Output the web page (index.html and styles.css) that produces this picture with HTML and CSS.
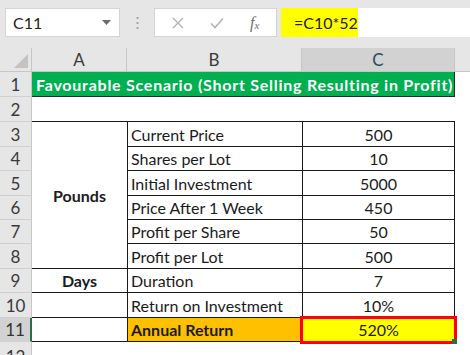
FILE: index.html
```html
<!DOCTYPE html>
<html>
<head>
<meta charset="utf-8">
<link rel="stylesheet" href="styles.css">
</head>
<body>
<div class="app">
  <div class="fbar">
    <div class="namebox">
      <span class="ref">C11</span>
      <svg class="caret" width="9" height="5" viewBox="0 0 9 5"><path d="M0 0H9L4.5 5Z" fill="#6b6b6b"/></svg>
    </div>
    <div class="grip">
      <svg width="3" height="14" viewBox="0 0 3 14"><rect x="0.5" y="1" width="2" height="2" fill="#a6a6a6"/><rect x="0.5" y="6" width="2" height="2" fill="#a6a6a6"/><rect x="0.5" y="11" width="2" height="2" fill="#a6a6a6"/></svg>
    </div>
    <div class="fbtns">
      <svg class="ico" width="12" height="12" viewBox="0 0 12 12"><path d="M1 1L11 11M11 1L1 11" stroke="#b4b4b4" stroke-width="1.4" fill="none"/></svg>
      <svg class="ico" width="14" height="12" viewBox="0 0 14 12"><path d="M1 6.5L5 10.5L13 1.5" stroke="#b4b4b4" stroke-width="1.6" fill="none"/></svg>
      <span class="fx">f<sub>x</sub></span>
    </div>
    <div class="finput"><span class="hl">=C10*52</span></div>
  </div>

  <div class="sheet">
    <div class="corner"><svg width="14" height="14" viewBox="0 0 14 14"><path d="M14 0V14H0Z" fill="#c4c4c4"/></svg></div>
    <div class="colh">A</div>
    <div class="colh">B</div>
    <div class="colh sel">C</div>
    <div class="colh rest"></div>

    <div class="rowh">1</div>
    <div class="title">Favourable Scenario (Short Selling Resulting in Profit)</div>
    <div class="blank"></div>

    <div class="rowh">2</div>
    <div class="gap"></div>
    <div class="blank"></div>

    <div class="rowh">3</div>
    <div class="grp pounds">Pounds</div>
    <div class="lbl">Current Price</div>
    <div class="val">500</div>
    <div class="blank"></div>

    <div class="rowh">4</div>
    <div class="lbl">Shares per Lot</div>
    <div class="val">10</div>
    <div class="blank"></div>

    <div class="rowh">5</div>
    <div class="lbl">Initial Investment</div>
    <div class="val">5000</div>
    <div class="blank"></div>

    <div class="rowh">6</div>
    <div class="lbl">Price After 1 Week</div>
    <div class="val">450</div>
    <div class="blank"></div>

    <div class="rowh">7</div>
    <div class="lbl">Profit per Share</div>
    <div class="val">50</div>
    <div class="blank"></div>

    <div class="rowh">8</div>
    <div class="lbl">Profit per Lot</div>
    <div class="val">500</div>
    <div class="blank"></div>

    <div class="rowh">9</div>
    <div class="grp">Days</div>
    <div class="lbl">Duration</div>
    <div class="val">7</div>
    <div class="blank"></div>

    <div class="rowh">10</div>
    <div class="grp"></div>
    <div class="lbl">Return on Investment</div>
    <div class="val">10%</div>
    <div class="blank"></div>

    <div class="rowh selrow">11</div>
    <div class="grp"></div>
    <div class="lbl annual">Annual Return</div>
    <div class="val result">520%<span class="handle"></span></div>
    <div class="blank"></div>

    <div class="rowh last">12</div>
    <div class="blank"></div>
    <div class="blank"></div>
    <div class="blank"></div>
    <div class="blank"></div>
  </div>
</div>
</body>
</html>
```

FILE: styles.css
```css
* { box-sizing: border-box; }
html, body { margin: 0; padding: 0; }
body {
  width: 470px;
  height: 355px;
  overflow: hidden;
  background: #ffffff;
  font-family: "Lato", "Open Sans", sans-serif;
  color: #1b1b1b;
}
.app { width: 470px; height: 355px; display: flex; flex-direction: column; }

/* formula bar */
.fbar {
  height: 48px;
  background: #e6e6e6;
  display: flex;
  align-items: flex-start;
  padding-top: 8px;
  flex: none;
}
.namebox {
  margin-left: 5px;
  width: 115px;
  height: 29px;
  background: #fff;
  border: 1px solid #d4d4d4;
  display: flex;
  align-items: center;
  justify-content: space-between;
  padding: 0 8px 0 7px;
  font-size: 16px;
  color: #222;
}
.grip { width: 34px; height: 29px; display: flex; align-items: center; justify-content: center; }
.fbtns {
  width: 123px;
  height: 29px;
  background: #fff;
  border: 1px solid #d4d4d4;
  display: flex;
  align-items: center;
  padding-left: 17px;
}
.ico:first-child { margin-right: 26px; }
.ico:nth-child(2) { margin-right: 26px; }
.fx {
  font-family: "Liberation Serif", serif;
  font-style: italic;
  font-size: 16px;
  color: #6e6e6e;
}
.fx sub { font-size: 11px; vertical-align: -1px; }
.finput {
  margin-left: 4px;
  flex: 1;
  height: 29px;
  background: #fff;
  display: flex;
}
.hl {
  width: 77px;
  height: 29px;
  background: #ffff00;
  padding-left: 13px;
  display: flex;
  align-items: center;
  font-size: 16px;
  color: #222;
}

/* sheet */
.sheet {
  flex: 1;
  display: grid;
  grid-template-columns: 32px 95px 175px 153px 1fr;
  grid-template-rows: 24px 25px 25px 25px 24px 25px 24px 24px 25px 24px 25px 24px 1fr;
  font-size: 16px;
  background: #fff;
}
.corner {
  background: #e6e6e6;
  border-right: 1px solid #c6c6c6;
  border-bottom: 1px solid #c6c6c6;
  display: flex;
  align-items: flex-end;
  justify-content: flex-end;
  padding: 0 3px 3px 0;
}
.colh {
  background: #e6e6e6;
  border-right: 1px solid #c6c6c6;
  border-bottom: 1px solid #c6c6c6;
  display: flex;
  align-items: center;
  justify-content: center;
  color: #3a3a3a;
  font-size: 17px;
}
.colh.sel { background: #d2d2d2; color: #2b4a5a; }
.colh.rest { border-right: none; }
.rowh {
  background: #e6e6e6;
  border-right: 1px solid #c6c6c6;
  border-bottom: 1px solid #d0d0d0;
  display: flex;
  align-items: center;
  justify-content: center;
  color: #3a3a3a;
  font-size: 17px;
}
.rowh.last { align-items: flex-start; padding-top: 4px; }
.rowh.selrow { background: #d2d2d2; border-right: 2px solid #217346; color: #333; }

.title {
  grid-column: span 3;
  background: #00b050;
  color: #fff;
  font-weight: 700;
  font-size: 16px;
  letter-spacing: 0.75px;
  display: flex;
  align-items: center;
  padding-left: 4px;
  white-space: nowrap;
  border-right: 1px solid #2a2a2a;
  border-bottom: 1px solid #2a2a2a;
}
.gap { grid-column: span 3; border-bottom: 1px solid #1a1a1a; }
.grp {
  border-bottom: 1px solid #1a1a1a;
  display: flex;
  align-items: center;
  justify-content: center;
  font-weight: 700;
}
.pounds { grid-row: span 6; }
.lbl {
  border-left: 1px solid #1a1a1a;
  border-bottom: 1px solid #1a1a1a;
  display: flex;
  align-items: center;
  padding-left: 3px;
  white-space: nowrap;
}
.val {
  border-left: 1px solid #1a1a1a;
  border-right: 1px solid #1a1a1a;
  border-bottom: 1px solid #1a1a1a;
  display: flex;
  align-items: center;
  justify-content: center;
}
.annual { background: #ffc000; font-weight: 700; }
.result {
  background: #ffff00;
  outline: 3px solid #ff0000;
  outline-offset: -1px;
  position: relative;
}
.handle {
  position: absolute;
  right: -3px;
  bottom: -3px;
  width: 5px;
  height: 5px;
  background: #217346;
}
```
